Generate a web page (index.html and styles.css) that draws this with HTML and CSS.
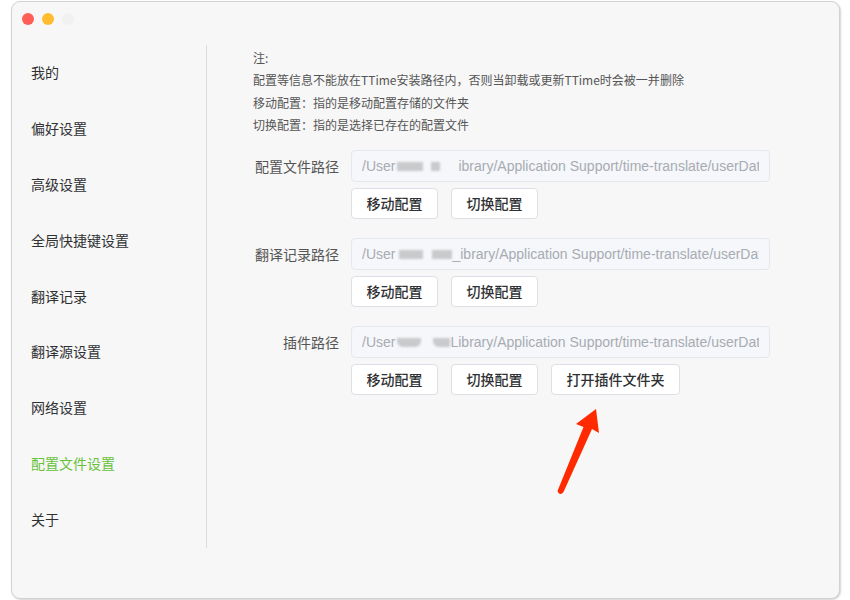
FILE: index.html
```html
<!DOCTYPE html>
<html lang="zh">
<head>
<meta charset="utf-8">
<link rel="stylesheet" href="styles.css">
</head>
<body>
<div class="window">
  <div class="titlebar">
    <span class="light red"></span>
    <span class="light yellow"></span>
    <span class="light gray"></span>
  </div>
  <div class="main">
    <nav class="sidebar">
      <div class="nav-item">我的</div>
      <div class="nav-item">偏好设置</div>
      <div class="nav-item">高级设置</div>
      <div class="nav-item">全局快捷键设置</div>
      <div class="nav-item">翻译记录</div>
      <div class="nav-item">翻译源设置</div>
      <div class="nav-item">网络设置</div>
      <div class="nav-item active">配置文件设置</div>
      <div class="nav-item">关于</div>
    </nav>
    <section class="content">
      <div class="notes">
        <p>注:</p>
        <p>配置等信息不能放在TTime安装路径内，否则当卸载或更新TTime时会被一并删除</p>
        <p>移动配置：指的是移动配置存储的文件夹</p>
        <p>切换配置：指的是选择已存在的配置文件</p>
      </div>
      <div class="form-row">
        <label class="label">配置文件路径</label>
        <div class="field">
          <div class="input"><div class="value"><span>/User</span><span class="blur b1"></span><span class="blur b2"></span><span>ibrary/Application Support/time-translate/userData</span></div></div>
          <div class="buttons">
            <button class="btn">移动配置</button>
            <button class="btn">切换配置</button>
          </div>
        </div>
      </div>
      <div class="form-row">
        <label class="label">翻译记录路径</label>
        <div class="field">
          <div class="input"><div class="value"><span>/User</span><span class="blur b3"></span><span class="blur b4"></span><span>_ibrary/Application Support/time-translate/userData</span></div></div>
          <div class="buttons">
            <button class="btn">移动配置</button>
            <button class="btn">切换配置</button>
          </div>
        </div>
      </div>
      <div class="form-row">
        <label class="label">插件路径</label>
        <div class="field">
          <div class="input"><div class="value"><span>/User</span><span class="blur b5"></span><span class="blur b6"></span><span>Library/Application Support/time-translate/userData</span></div></div>
          <div class="buttons">
            <button class="btn">移动配置</button>
            <button class="btn">切换配置</button>
            <button class="btn wide">打开插件文件夹</button>
          </div>
        </div>
      </div>
    </section>
  </div>
  <svg class="arrow" width="60" height="100" viewBox="540 400 60 100" xmlns="http://www.w3.org/2000/svg">
    <path d="M595 408 L598 432 L591 428 L562.5 491 Q560 494.5 557.5 492 L556.5 490 L582.5 426 L575 423 Z" fill="#ff2a00"/>
  </svg>
</div>
</body>
</html>
```

FILE: styles.css
```css
* { box-sizing: border-box; }
html, body { margin: 0; padding: 0; background: #ffffff; }
body {
  font-family: "Noto Sans CJK SC", "Liberation Sans", sans-serif;
  color: #303133;
  width: 850px;
  height: 600px;
  overflow: hidden;
}
.window {
  position: relative;
  margin: 1px 0 0 11px;
  width: 829px;
  height: 598px;
  background: #f7f7f7;
  border: 1px solid #d2d2d2;
  border-radius: 9px;
  box-shadow: 1px 1px 2px rgba(0,0,0,0.18);
}
.titlebar {
  height: 43px;
  display: flex;
  gap: 8px;
  align-items: flex-start;
  padding: 11px 0 0 10px;
}
.light {
  width: 12px;
  height: 12px;
  border-radius: 50%;
}
.light.red { background: #ff5f57; }
.light.yellow { background: #febc2e; }
.light.gray { background: #f1f1f1; }
.main {
  display: flex;
  height: 503px;
}
.sidebar {
  width: 195px;
  border-right: 1px solid #dcdcdf;
  display: flex;
  flex-direction: column;
}
.nav-item {
  height: 56px;
  line-height: 54px;
  padding-left: 19px;
  font-size: 14px;
  color: #303133;
}
.nav-item.active { color: #67c23a; }
.content {
  flex: 1;
  padding: 2px 0 0 46px;
}
.notes { margin-bottom: 13px; }
.notes p {
  margin: 0;
  font-size: 12px;
  line-height: 22.4px;
  color: #555555;
}
.form-row {
  display: flex;
  margin-bottom: 19px;
}
.label {
  width: 98px;
  padding-right: 12px;
  text-align: right;
  font-size: 14px;
  line-height: 32px;
  color: #555555;
}
.field { display: flex; flex-direction: column; gap: 6px; }
.input {
  width: 419px;
  height: 32px;
  background: #f5f7fa;
  border: 1px solid #e4e7ed;
  border-radius: 4px;
  padding: 0 10px;
  font-family: "Liberation Sans", sans-serif;
  font-size: 14px;
  line-height: 30px;
  color: #a8abb2;
}
.value {
  height: 30px;
  white-space: nowrap;
  overflow: hidden;
  display: flex;
  align-items: center;
}
.value span { flex: none; }
.blur {
  display: inline-block;
  height: 9px;
  background: #c9cacc;
  filter: blur(0.8px);
  margin-top: 2px;
}
.b1 { width: 26px; margin-left: 2px; }
.b2 { width: 9px; margin-left: 8px; margin-right: 18px; }
.b3 { width: 24px; margin-left: 4px; }
.b4 { width: 20px; margin-left: 9px; }
.b5 { width: 24px; margin-left: 2px; border-radius: 0 0 6px 6px; }
.b6 { width: 17px; margin-left: 12px; border-radius: 0 0 0 6px; }
.buttons { display: flex; gap: 13px; }
.btn {
  width: 87px;
  height: 31px;
  background: #ffffff;
  border: 1px solid #dcdfe6;
  border-radius: 4px;
  font-family: "Noto Sans CJK SC", sans-serif;
  font-size: 14px;
  font-weight: 500;
  color: #303133;
  padding: 0;
}
.btn.wide { width: 129px; }
.arrow {
  position: absolute;
  left: 529px;
  top: 399px;
}
```
